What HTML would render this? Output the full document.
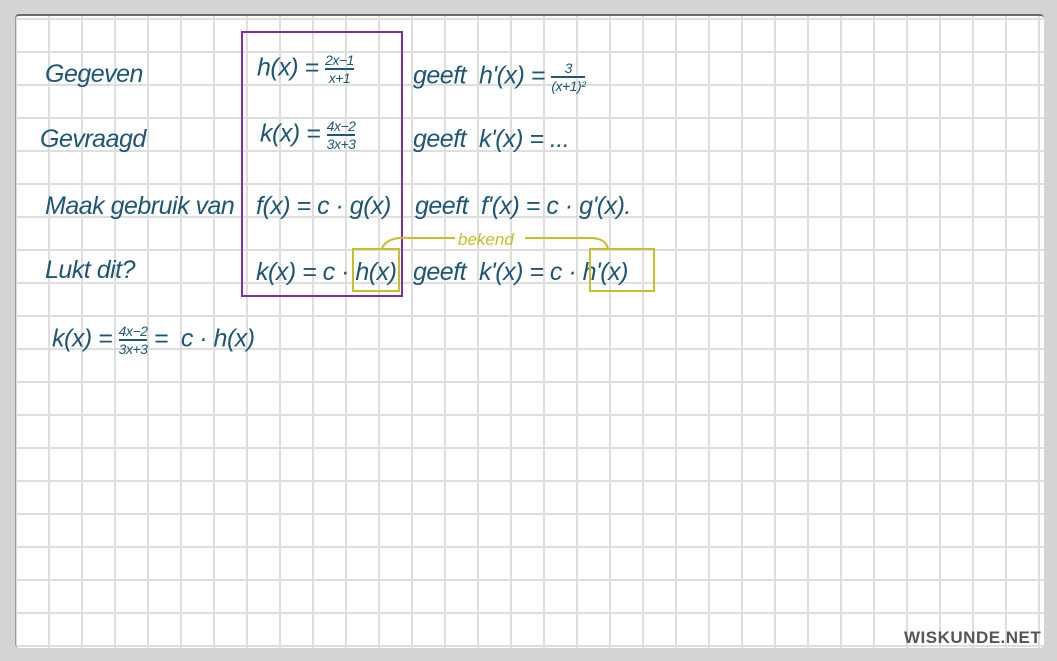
<!DOCTYPE html>
<html><head><meta charset="utf-8"><style>
html,body{margin:0;padding:0}
body{width:1057px;height:661px;background:#d4d4d4;position:relative;overflow:hidden;font-family:"Liberation Sans",sans-serif}
#board{position:absolute;left:15px;top:14px;width:1028px;height:632px;background-color:#fff;border-top:2px solid #6a6a6a;border-left:1px solid #999;border-radius:4px;
background-image:linear-gradient(to right,#dedede 2px,transparent 2px),linear-gradient(to bottom,#dedede 2px,transparent 2px);
background-size:33px 33px;background-position:32px 35px}
.t{position:absolute;color:#1e5673;font-size:25px;font-style:italic;white-space:nowrap;font-family:"Liberation Sans",sans-serif;letter-spacing:-0.5px}
.f{display:inline-block;vertical-align:middle;text-align:center;font-size:14px;line-height:16px}
.f span{display:block}
.f span:first-child{border-bottom:2px solid #1e5673}
.y{position:absolute;border:2px solid #c7bf2a}
</style></head><body>
<div id="board"></div>
<div style="position:absolute;left:241px;top:31px;width:158px;height:262px;border:2px solid #7b2ea8"></div>
<div class="t" style="left:45px;top:60px">Gegeven</div>
<div class="t" style="left:40px;top:125px">Gevraagd</div>
<div class="t" style="left:45px;top:192px">Maak gebruik van</div>
<div class="t" style="left:45px;top:256px">Lukt dit?</div>
<div class="t" style="left:257px;top:52px">h(x) = <span class="f"><span>2x−1</span><span>x+1</span></span></div>
<div class="t" style="left:260px;top:118px">k(x) = <span class="f"><span>4x−2</span><span>3x+3</span></span></div>
<div class="t" style="left:256px;top:192px">f(x) = c · g(x)</div>
<div class="t" style="left:256px;top:258px">k(x) = c · h(x)</div>
<div class="t" style="left:413px;top:60px">geeft &nbsp;h'(x) = <span class="f"><span>3</span><span>(x+1)²</span></span></div>
<div class="t" style="left:413px;top:125px">geeft &nbsp;k'(x) = ...</div>
<div class="t" style="left:415px;top:192px">geeft &nbsp;f'(x) = c · g'(x).</div>
<div class="t" style="left:413px;top:258px">geeft &nbsp;k'(x) = c · h'(x)</div>
<div class="y" style="left:352px;top:248px;width:44px;height:40px"></div>
<div class="y" style="left:589px;top:248px;width:62px;height:40px"></div>
<svg style="position:absolute;left:380px;top:228px" width="230" height="25"><path d="M2 20 Q8 8 30 10 L75 10 M145 10 L210 10 Q225 10 228 20" fill="none" stroke="#c7bf2a" stroke-width="2"/></svg>
<div style="position:absolute;left:458px;top:230px;color:#c7bf2a;font-size:17px;font-style:italic">bekend</div>
<div class="t" style="left:52px;top:323px">k(x) = <span class="f"><span>4x−2</span><span>3x+3</span></span> = &nbsp;c · h(x)</div>
<div style="position:absolute;left:904px;top:628px;font-size:17px;font-weight:bold;color:#555;letter-spacing:0.5px">WISKUNDE.NET</div>
</body></html>
